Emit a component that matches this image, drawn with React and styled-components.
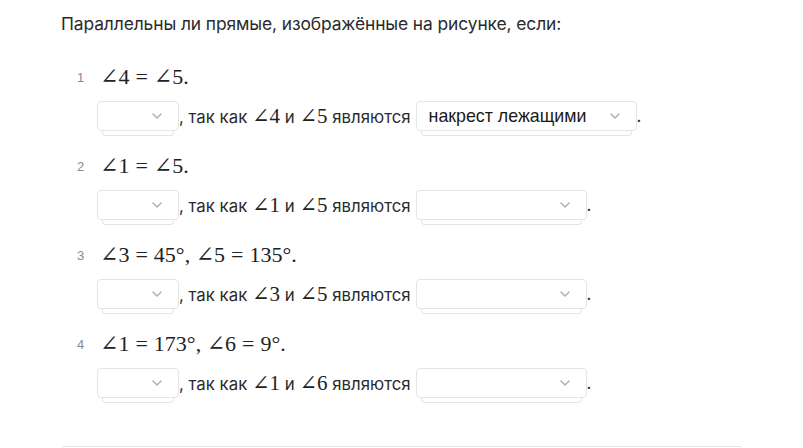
import React from "react";
import styled, { createGlobalStyle } from "styled-components";

const Global = createGlobalStyle`
  html, body { margin: 0; padding: 0; background: #fff; }
  body { overflow: hidden; }
`;

const Page = styled.div`
  padding: 11px 0 0 61px;
  font-family: Inter, "Noto Sans", sans-serif;
  color: #2b2b2b;
  width: 681px;
`;

const Title = styled.div`
  font-size: 17.4px;
  line-height: 26px;
  letter-spacing: -0.1px;
`;

const List = styled.ol`
  list-style: none;
  margin: 25px 0 0 0;
  padding: 0;
  display: flex;
  flex-direction: column;
  gap: 14px;
`;

const Item = styled.li`
  display: grid;
  grid-template-columns: 36px 1fr;
  grid-template-rows: 30px 36px;
  row-gap: 9px;
  align-items: center;
`;

const Num = styled.span`
  font-family: "Liberation Sans", Arial, sans-serif;
  font-size: 13px;
  color: #8a8a8a;
  padding-left: 16px;
`;

const MathLine = styled.span`
  font-family: "Liberation Serif", "DejaVu Serif", serif;
  font-size: 22px;
  color: #222;
  padding-left: 3px;
  white-space: pre;
`;

const Rel = styled.span`
  padding: 0 6px;
`;

const Answer = styled.div`
  grid-column: 2;
  display: flex;
  align-items: flex-start;
  font-size: 16.8px;
  height: 36px;
`;

const Inline = styled.span`
  line-height: 30px;
  white-space: pre;
`;

const M = styled.span`
  font-family: "Liberation Serif", "DejaVu Serif", serif;
  font-size: 21px;
  color: #222;
`;

const Select = styled.div`
  position: relative;
  box-sizing: border-box;
  width: ${(p) => p.$w}px;
  height: 30px;
  border: 1px solid #e4e4e4;
  border-radius: 4px;
  background: #fff;
  display: flex;
  align-items: center;
  padding: 0 0 0 12px;
  margin-left: ${(p) => p.$ml || 0}px;
  font-family: "Liberation Sans", Arial, sans-serif;
  font-size: 17.8px;
  color: #1a1a1a;
  &::after {
    content: "";
    position: absolute;
    left: 4px;
    right: 4px;
    top: 100%;
    height: 6px;
    border: 1px solid #e4e4e4;
    border-top: none;
    border-radius: 0 0 4px 4px;
    box-sizing: border-box;
  }
`;

const Value = styled.span`
  flex: 1;
  white-space: nowrap;
`;

const Chevron = styled.svg`
  position: absolute;
  right: 16px;
  top: 50%;
  margin-top: -3px;
`;

const Bottom = styled.div`
  margin-top: 42px;
  height: 1px;
  border-top: 1px solid #e2e2e2;
  border-radius: 6px 6px 0 0;
  margin-left: 1px;
`;

function Dropdown({ w, value, ml }) {
  return (
    <Select $w={w} $ml={ml}>
      <Value>{value}</Value>
      <Chevron width="10" height="6" viewBox="0 0 10 6">
        <path d="M1 1l4 4 4-4" fill="none" stroke="#b0b0b0" strokeWidth="1.5" strokeLinecap="round" strokeLinejoin="round" />
      </Chevron>
    </Select>
  );
}

function MathExpr({ parts }) {
  return (
    <MathLine>
      {parts.map(([l, r], i) => (
        <React.Fragment key={i}>
          {i > 0 ? ", " : ""}
          {l}
          <Rel>=</Rel>
          {r}
        </React.Fragment>
      ))}
      .
    </MathLine>
  );
}

const items = [
  { n: 1, parts: [["∠4", "∠5"]], a: "∠4", b: "∠5", value: "накрест лежащими", w: 221 },
  { n: 2, parts: [["∠1", "∠5"]], a: "∠1", b: "∠5", value: "", w: 171 },
  { n: 3, parts: [["∠3", "45°"], ["∠5", "135°"]], a: "∠3", b: "∠5", value: "", w: 171 },
  { n: 4, parts: [["∠1", "173°"], ["∠6", "9°"]], a: "∠1", b: "∠6", value: "", w: 171 },
];

export default function App() {
  return (
    <>
      <Global />
      <Page>
        <Title>Параллельны ли прямые, изображённые на рисунке, если:</Title>
        <List>
          {items.map((it) => (
            <Item key={it.n}>
              <Num>{it.n}</Num>
              <MathExpr parts={it.parts} />
              <Answer>
                <Dropdown w={82} value="" />
                <Inline>
                  , так как <M>{it.a}</M> и <M>{it.b}</M> являются
                </Inline>
                <Dropdown w={it.w} value={it.value} ml={5} />
                <Inline>.</Inline>
              </Answer>
            </Item>
          ))}
        </List>
        <Bottom />
      </Page>
    </>
  );
}
